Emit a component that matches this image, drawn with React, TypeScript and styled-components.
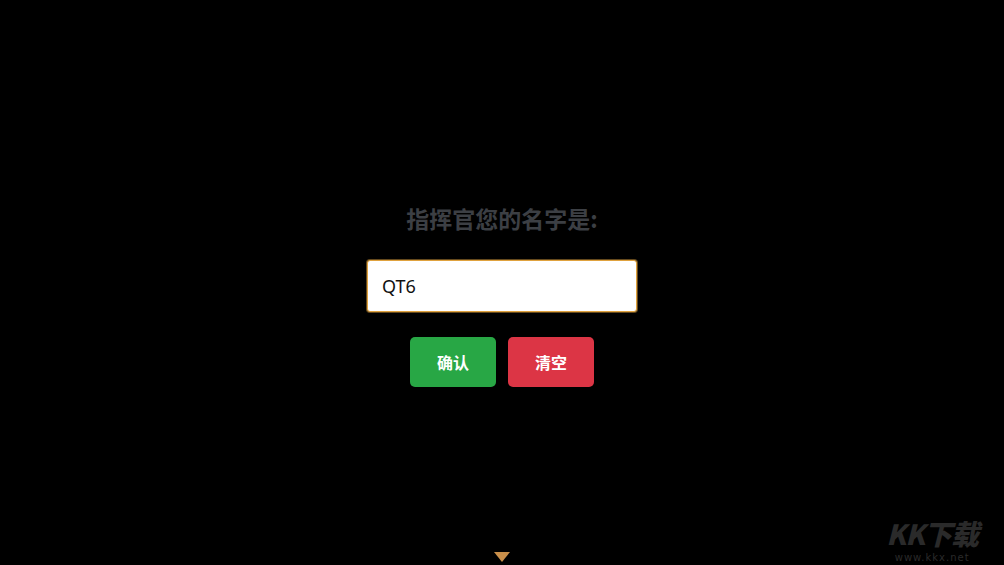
import React from "react";
import styled, { createGlobalStyle } from "styled-components";

const Global = createGlobalStyle`
  html, body { margin: 0; padding: 0; background: #000; }
  body { font-family: "Noto Sans", "Noto Sans CJK SC", sans-serif; }
`;

const Page = styled.div`
  position: relative;
  width: 1004px;
  height: 565px;
  background: #000;
  overflow: hidden;
  display: flex;
  flex-direction: column;
  align-items: center;
  padding-top: 203px;
  box-sizing: border-box;
`;

const Title = styled.h2`
  margin: 0;
  font-family: "Noto Sans CJK SC", "Noto Sans", sans-serif;
  font-size: 23px;
  line-height: 30px;
  font-weight: 700;
  color: #3c3f44;
`;

const NameInput = styled.input`
  margin-top: 27px;
  width: 270px;
  height: 52px;
  box-sizing: border-box;
  border: 1px solid #e0a23e;
  border-radius: 3px;
  box-shadow: 0 0 0 1px rgba(224, 162, 62, 0.45);
  background: #fff;
  padding: 0 14px;
  font-family: "Noto Sans", "Noto Sans CJK SC", sans-serif;
  font-size: 18px;
  color: #111;
  outline: none;
`;

const Buttons = styled.div`
  margin-top: 25px;
  display: flex;
  gap: 12px;
`;

const Btn = styled.button<{ $bg: string }>`
  width: 86px;
  height: 50px;
  border: none;
  border-radius: 5px;
  background: ${(p) => p.$bg};
  color: #fff;
  font-family: "Noto Sans CJK SC", "Noto Sans", sans-serif;
  font-size: 16px;
  font-weight: 700;
  cursor: pointer;
  padding: 0;
`;

const Arrow = styled.div`
  position: absolute;
  left: 494px;
  bottom: 3px;
  width: 0;
  height: 0;
  border-left: 8px solid transparent;
  border-right: 8px solid transparent;
  border-top: 10px solid #c98f4a;
`;

const Watermark = styled.div`
  position: absolute;
  right: 26px;
  bottom: 2px;
  display: flex;
  flex-direction: column;
  align-items: center;
  gap: 4px;
  color: #2a2a2a;
`;

const MarkLogo = styled.div`
  font-family: "Noto Sans CJK SC", sans-serif;
  font-size: 28px;
  font-weight: 900;
  line-height: 30px;
  letter-spacing: -1px;
  font-style: italic;
`;

const MarkUrl = styled.div`
  font-family: "DejaVu Sans", sans-serif;
  font-size: 10px;
  line-height: 11px;
  letter-spacing: 1px;
`;

export default function App() {
  return (
    <>
      <Global />
      <Page>
        <Title>指挥官您的名字是:</Title>
        <NameInput defaultValue="QT6" />
        <Buttons>
          <Btn $bg="#28a745">确认</Btn>
          <Btn $bg="#dc3545">清空</Btn>
        </Buttons>
        <Arrow />
        <Watermark>
          <MarkLogo>KK下载</MarkLogo>
          <MarkUrl>www.kkx.net</MarkUrl>
        </Watermark>
      </Page>
    </>
  );
}
